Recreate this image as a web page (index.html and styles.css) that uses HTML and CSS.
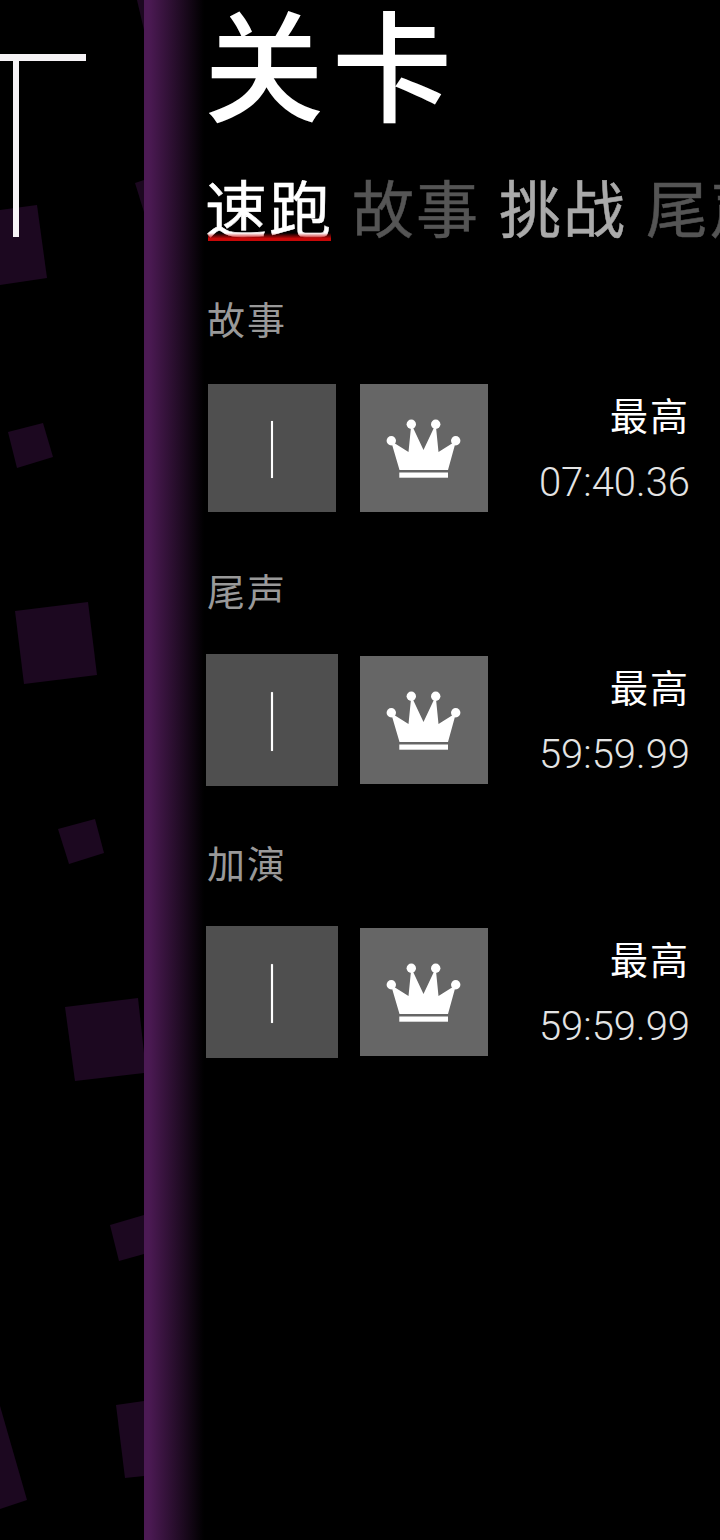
FILE: index.html
```html
<!DOCTYPE html>
<html lang="zh">
<head>
<meta charset="utf-8">
<title>关卡</title>
<link rel="stylesheet" href="styles.css">
</head>
<body>
<div class="screen">
  <div class="backdrop">
    <svg class="shards" viewBox="0 0 144 1540" width="144" height="1540">
      <polygon points="0,210 37,205 47,278 0,285"/>
      <polygon points="137,0 144,0 144,30"/>
      <polygon points="135,183 144,180 144,212"/>
      <polygon points="8,432 43,423 53,457 17,468"/>
      <polygon points="15,611 88,602 97,675 24,684"/>
      <polygon points="58,829 95,819 104,853 69,864"/>
      <polygon points="65,1007 138,998 144,1053 144,1073 75,1081"/>
      <polygon points="110,1225 144,1215 144,1254 119,1261"/>
      <polygon points="116,1405 144,1401 144,1476 125,1478"/>
      <polygon points="0,1406 27,1500 0,1509"/>
    </svg>
    <div class="glyph-bar"></div>
    <div class="glyph-stem"></div>
  </div>
  <div class="divider"></div>
  <main class="content">
    <h1 class="title">关卡</h1>
    <nav class="tabs">
      <span class="tab active">速跑</span>
      <span class="tab dim">故事</span>
      <span class="tab mid">挑战</span>
      <span class="tab dim">尾声</span>
    </nav>
    <section class="level">
      <h2 class="level-name">故事</h2>
      <div class="level-row">
        <div class="tile tile-run"><span class="caret"></span></div>
        <div class="tile tile-crown">
          <svg class="crown" viewBox="0 0 128 128"><use href="#crown"/></svg>
        </div>
        <div class="best"><span class="best-label">最高</span><span class="best-time">07:40.36</span></div>
      </div>
    </section>
    <section class="level">
      <h2 class="level-name">尾声</h2>
      <div class="level-row">
        <div class="tile tile-run focused"><span class="caret"></span></div>
        <div class="tile tile-crown">
          <svg class="crown" viewBox="0 0 128 128"><use href="#crown"/></svg>
        </div>
        <div class="best"><span class="best-label">最高</span><span class="best-time">59:59.99</span></div>
      </div>
    </section>
    <section class="level">
      <h2 class="level-name">加演</h2>
      <div class="level-row">
        <div class="tile tile-run focused"><span class="caret"></span></div>
        <div class="tile tile-crown">
          <svg class="crown" viewBox="0 0 128 128"><use href="#crown"/></svg>
        </div>
        <div class="best"><span class="best-label">最高</span><span class="best-time">59:59.99</span></div>
      </div>
    </section>
  </main>
</div>
<svg class="defs" width="0" height="0">
  <defs>
    <g id="crown" fill="#fff">
      <circle cx="31.3" cy="56.7" r="4.7"/>
      <circle cx="51.3" cy="40.3" r="4.7"/>
      <circle cx="75.7" cy="40.3" r="4.7"/>
      <circle cx="95.7" cy="56.7" r="4.7"/>
      <polygon points="31,57 48.5,68 51.3,40 63.5,66 75.7,40 78.5,68 96,57 88,86 39.5,86"/>
      <rect x="39.3" y="88.5" width="48.7" height="5.2"/>
    </g>
  </defs>
</svg>
</body>
</html>
```

FILE: styles.css
```css
* { box-sizing: border-box; }
html, body { margin: 0; padding: 0; background: #000; }
body { font-family: "Noto Sans CJK SC", "Noto Sans", sans-serif; }

.screen {
  display: flex;
  width: 720px;
  height: 1540px;
  overflow: hidden;
  background: #000;
}

.backdrop {
  position: relative;
  flex: 0 0 144px;
  height: 100%;
}
.shards { display: block; fill: #1c0820; }
.glyph-bar {
  position: absolute;
  left: 0;
  top: 54px;
  width: 86px;
  height: 7px;
  background: #f6f3f6;
}
.glyph-stem {
  position: absolute;
  left: 13px;
  top: 61px;
  width: 6px;
  height: 176px;
  background: #f6f3f6;
}

.divider {
  flex: 0 0 60px;
  background: linear-gradient(to right, #4c1a54 0, #4c1a54 8%, #000 100%);
}

.content {
  flex: 1 1 auto;
  min-width: 0;
  overflow: hidden;
}

.title {
  margin: 0;
  height: 140px;
  font-size: 120px;
  line-height: 122px;
  letter-spacing: 8px;
  font-weight: 500;
  color: #fff;
  white-space: nowrap;
}

.tabs {
  display: flex;
  gap: 19px;
  margin-top: 30px;
  padding-left: 1px;
  height: 72px;
  white-space: nowrap;
}
.tab {
  position: relative;
  flex: none;
  font-size: 62px;
  line-height: 72px;
  letter-spacing: 2px;
  font-weight: 400;
  -webkit-text-stroke: 0.5px currentColor;
}
.tab.active { color: #fff; }
.tab.active::after {
  content: "";
  position: absolute;
  left: 3px;
  right: 2px;
  bottom: 1px;
  height: 8px;
  background: linear-gradient(to bottom, rgba(204,0,0,0), #c80808 70%);
}
.tab.dim { color: #555; }
.tab.mid { color: #aaa; }

.level { height: 272px; }
.level:first-of-type { margin-top: 48px; }

.level-name {
  margin: 0 0 0 3px;
  height: 56px;
  font-size: 38px;
  line-height: 56px;
  letter-spacing: 2px;
  font-weight: 400;
  color: #999;
}

.level-row {
  display: flex;
  align-items: center;
  gap: 24px;
  height: 128px;
  margin-top: 38px;
  padding-left: 4px;
}

.tile {
  display: flex;
  flex: none;
  align-items: center;
  justify-content: center;
  width: 128px;
  height: 128px;
}
.tile-run { background: #4f4f4f; }
.tile-run.focused { transform: scale(1.03125); }
.tile-crown { background: #666; }
.caret {
  display: block;
  width: 2px;
  height: 57px;
  margin-top: 3px;
  background: #fff;
  box-shadow: 0 0 1px rgba(255,255,255,.5);
}
.crown {
  display: block;
  width: 128px;
  height: 128px;
}

.best {
  display: flex;
  flex: 1 1 auto;
  flex-direction: column;
  align-items: flex-end;
  padding-top: 2px;
  padding-right: 30px;
}
.best-label {
  font-size: 38px;
  line-height: 68px;
  letter-spacing: 2px;
  font-weight: 400;
  color: #fff;
}
.best-time {
  font-family: Roboto, "Noto Sans", sans-serif;
  font-size: 40px;
  line-height: 70px;
  font-weight: 300;
  color: #e4e4e4;
}

.defs { position: absolute; }
```
